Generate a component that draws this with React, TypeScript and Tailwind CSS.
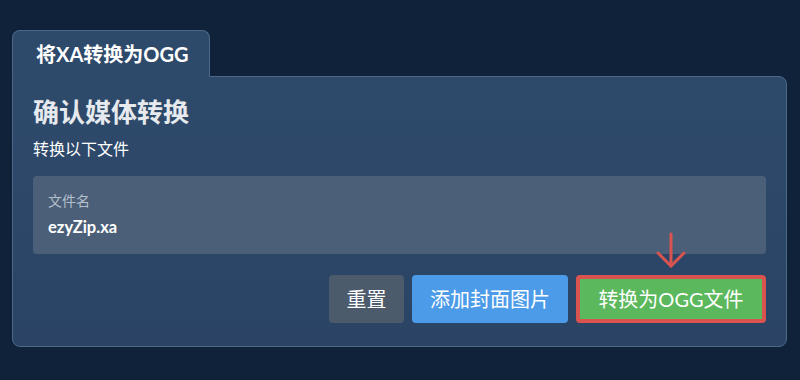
import React from "react";

const font = { fontFamily: "Lato, 'Noto Sans CJK SC', sans-serif" };

const DownArrow: React.FC = () => (
  <svg
    className="absolute left-1/2 -translate-x-1/2 -top-[43px] h-[37px] w-[34px]"
    viewBox="0 0 34 37"
    fill="none"
    stroke="#d9534f"
    strokeWidth="3"
    strokeLinecap="round"
    strokeLinejoin="round"
  >
    <path d="M17 2 V34" />
    <path d="M4 21 L17 34 L30 21" />
  </svg>
);

export default function App() {
  return (
    <div className="min-h-[380px] w-full bg-[#10223a] pt-[30px] pl-[12px] pr-[13px]" style={font}>
      <div className="relative z-10 -mb-px flex h-[47px] w-[198px] items-center rounded-t-lg border border-b-[#2e4a6b] border-[#4b6889] bg-[#2e4a6b] pl-[23px]">
        <span className="text-[20px] font-bold text-white">将XA转换为OGG</span>
      </div>
      <div className="rounded-b-lg rounded-tr-lg border border-[#4b6889] bg-gradient-to-b from-[#2e4a6b] to-[#2b4466] px-[20px] pt-[19px] pb-[23px]">
        <h2 className="text-[26px] font-bold leading-[32px] text-[#e6e9ed]">确认媒体转换</h2>
        <p className="mt-[9px] text-[16px] leading-[24px] text-white">转换以下文件</p>
        <div className="mt-[15px] rounded bg-[#4b5f78] px-[15px] pt-[15px] pb-[15px]">
          <div className="text-[14px] leading-[20px] text-[#b4bfcc]">文件名</div>
          <div className="mt-[4px] text-[16.5px] font-bold leading-[24px] text-white">ezyZip.xa</div>
        </div>
        <div className="mt-[21px] flex justify-end gap-[8px]">
          <button className="flex h-[48px] w-[75px] items-center justify-center rounded bg-[#4c5b6c] text-[20px] text-white">
            重置
          </button>
          <button className="flex h-[48px] w-[156px] items-center justify-center rounded bg-[#4c9be8] text-[20px] text-white">
            添加封面图片
          </button>
          <div className="relative">
            <DownArrow />
            <button className="flex h-[48px] w-[190px] items-center justify-center rounded border-[4px] border-[#d9534f] bg-[#5cb85c] text-[20px] text-white">
              转换为OGG文件
            </button>
          </div>
        </div>
      </div>
    </div>
  );
}
